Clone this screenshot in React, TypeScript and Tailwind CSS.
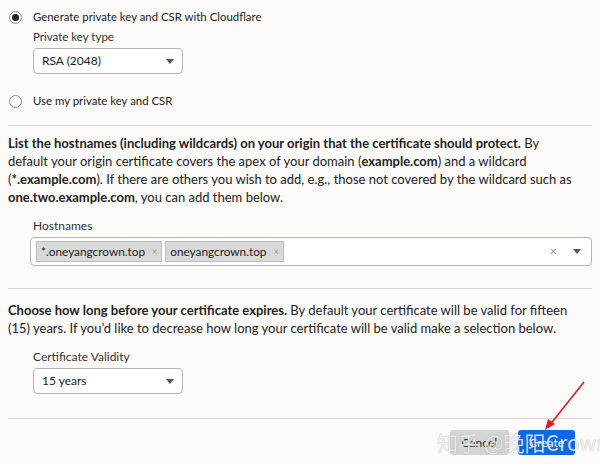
import React from 'react';

function Caret() {
  return (
    <svg width="8" height="5" viewBox="0 0 8 5" className="flex-shrink-0">
      <path d="M0 0h8L4 5z" fill="#555" />
    </svg>
  );
}

function Select({ value }: { value: string }) {
  return (
    <div className="w-[150px] h-[26px] border border-[#b4b4b4] rounded-[4px] bg-white flex items-center justify-between pl-[8px] pr-[8px] text-[12px] text-[#222]">
      <span>{value}</span>
      <Caret />
    </div>
  );
}

function Radio({ checked, label }: { checked: boolean; label: string }) {
  return (
    <div className="flex items-center gap-[11px] pl-[1px] h-[18px]">
      <div className="w-[13px] h-[13px] rounded-full border border-[#8a8a8a] bg-white flex items-center justify-center">
        {checked && <div className="w-[7px] h-[7px] rounded-full bg-[#222]" />}
      </div>
      <span className="text-[11.4px] text-[#222]">{label}</span>
    </div>
  );
}

function Tag({ label }: { label: string }) {
  return (
    <div className="h-[21px] bg-[#d9d9d9] border border-[#bdbdbd] flex items-center gap-[7px] pl-[4px] pr-[4px] text-[11.8px] text-[#222]">
      <span>{label}</span>
      <span className="text-[9px] text-[#999]">×</span>
    </div>
  );
}

export default function App() {
  return (
    <div
      className="relative w-[600px] h-[464px] overflow-hidden bg-[#fdfbf9] text-[#222]"
      style={{ fontFamily: 'Lato, "Open Sans", sans-serif' }}
    >
      <div className="px-[8px] pt-[8px]">
        <Radio checked label="Generate private key and CSR with Cloudflare" />
        <div className="pl-[25px] mt-[3px]">
          <div className="text-[11.5px] text-[#333] leading-[16px]">Private key type</div>
          <div className="mt-[3px]">
            <Select value="RSA (2048)" />
          </div>
        </div>
        <div className="mt-[18px]">
          <Radio checked={false} label="Use my private key and CSR" />
        </div>

        <div className="mt-[15px] border-t border-[#d6d6d6]" />

        <p className="mt-[8px] text-[13px] leading-[18px] pr-[10px]">
          <b>List the hostnames (including wildcards) on your origin that the certificate should protect.</b> By
          default your origin certificate covers the apex of your domain (<b>example.com</b>) and a wildcard (
          <b>*.example.com</b>). If there are others you wish to add, e.g., those not covered by the wildcard such as{' '}
          <b>one.two.example.com</b>, you can add them below.
        </p>

        <div className="pl-[22px] mt-[12px]">
          <div className="pl-[3px] text-[12px] text-[#333] leading-[16px]">Hostnames</div>
          <div className="mt-[3px] h-[29px] border border-[#b4b4b4] rounded-[4px] bg-white flex items-center pl-[5px] pr-[10px] gap-[3px]">
            <Tag label="*.oneyangcrown.top" />
            <Tag label="oneyangcrown.top" />
            <div className="flex-1" />
            <span className="text-[13px] text-[#999] mr-[13px]">×</span>
            <Caret />
          </div>
        </div>

        <div className="mt-[22px] border-t border-[#d6d6d6]" />

        <p className="mt-[12px] text-[13px] leading-[18px] pr-[10px]">
          <b>Choose how long before your certificate expires.</b> By default your certificate will be valid for fifteen
          (15) years. If you’d like to decrease how long your certificate will be valid make a selection below.
        </p>

        <div className="pl-[25px] mt-[12px]">
          <div className="text-[12px] text-[#333] leading-[16px]">Certificate Validity</div>
          <div className="mt-[3px]">
            <Select value="15 years" />
          </div>
        </div>

        <div className="mt-[24px] border-t border-[#d6d6d6]" />

        <div className="flex justify-end gap-[9px] mt-[11px] pr-[17px]">
          <button className="h-[25px] px-[12px] rounded-[3px] bg-[#d4d4d4] text-[12px] text-[#333]">Cancel</button>
          <button className="h-[25px] px-[11px] rounded-[3px] bg-[#0a6ae6] text-[12px] text-white">Create</button>
        </div>
      </div>

      {/* red arrow annotation */}
      <svg className="absolute left-[540px] top-[380px]" width="50" height="52" viewBox="0 0 50 52">
        <path d="M44 2 L9 46" stroke="#d62020" strokeWidth="1.6" fill="none" />
        <path d="M5 50 L8 39 L15 44 Z" fill="#d62020" />
      </svg>

      {/* watermark */}
      <div
        className="absolute left-[437px] top-[427px] text-[21px] text-white/80 whitespace-nowrap"
        style={{ textShadow: '0 0 1px rgba(0,0,0,0.35)', fontFamily: '"Noto Sans CJK SC", "Noto Sans", sans-serif' }}
      >
        知乎 @晚阳Crown
      </div>
    </div>
  );
}
